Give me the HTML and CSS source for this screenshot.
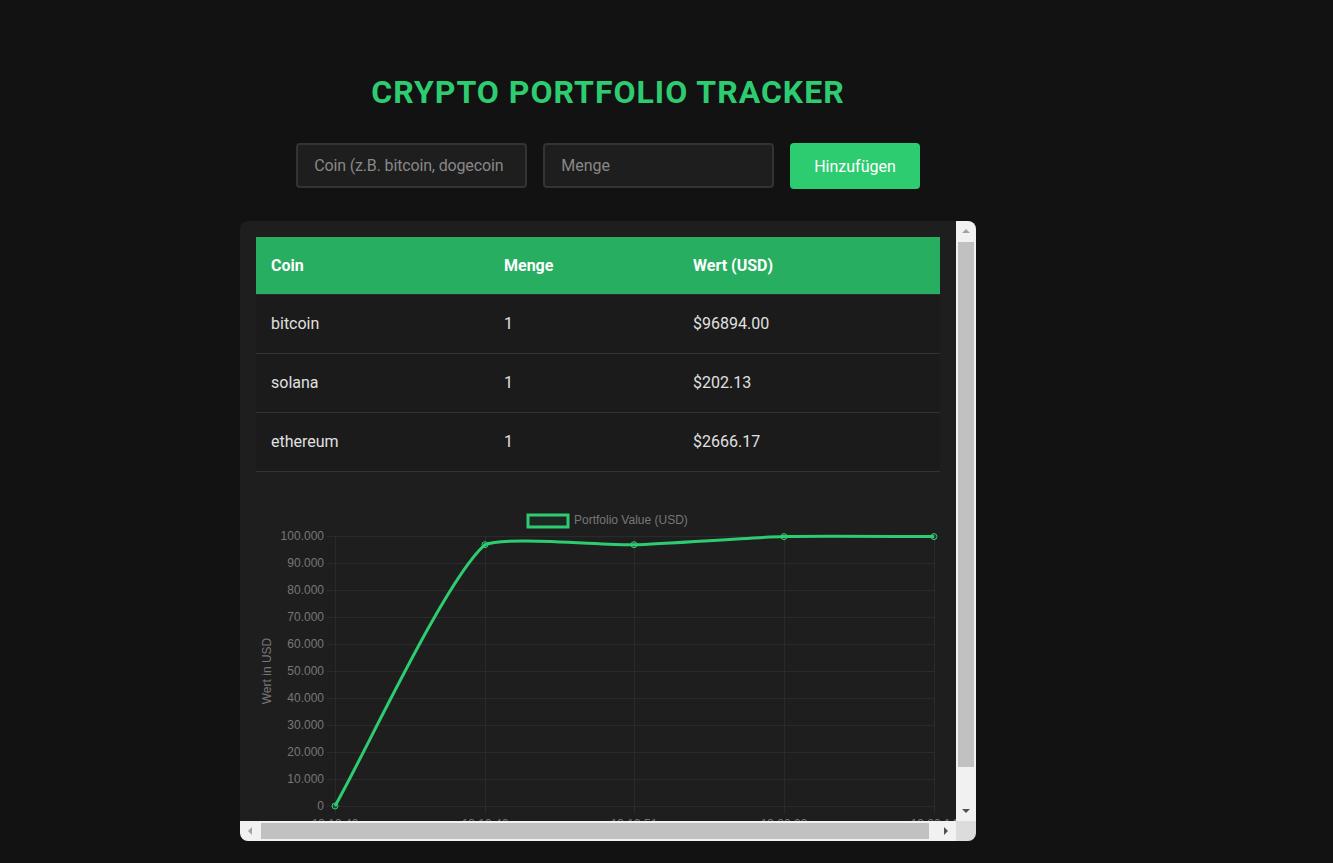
FILE: index.html
```html
<!DOCTYPE html>
<html lang="de">
<head>
<meta charset="utf-8">
<title>Crypto Portfolio Tracker</title>
<link rel="stylesheet" href="styles.css">
</head>
<body>
<div class="page">
  <div class="app">
    <h1 class="title">Crypto Portfolio Tracker</h1>
    <div class="form">
      <input class="field field-coin" type="text" placeholder="Coin (z.B. bitcoin, dogecoin">
      <input class="field" type="text" placeholder="Menge">
      <button class="btn" type="button">Hinzufügen</button>
    </div>
    <div class="panel">
      <div class="viewport">
        <table class="table">
          <colgroup>
            <col class="col-coin">
            <col class="col-amount">
            <col class="col-value">
          </colgroup>
          <thead>
            <tr><th>Coin</th><th>Menge</th><th>Wert (USD)</th></tr>
          </thead>
          <tbody>
            <tr><td>bitcoin</td><td>1</td><td>$96894.00</td></tr>
            <tr><td>solana</td><td>1</td><td>$202.13</td></tr>
            <tr><td>ethereum</td><td>1</td><td>$2666.17</td></tr>
          </tbody>
        </table>
        <svg class="chart" width="704" height="352" viewBox="0 0 704 352" xmlns="http://www.w3.org/2000/svg">
          <rect class="legend-box" x="272" y="23" width="40" height="12"/>
          <text class="lbl" x="318" y="32">Portfolio Value (USD)</text>
          <g class="grid">
            <line x1="71" y1="44.5" x2="678" y2="44.5"/>
            <line x1="71" y1="71.5" x2="678" y2="71.5"/>
            <line x1="71" y1="98.5" x2="678" y2="98.5"/>
            <line x1="71" y1="125.5" x2="678" y2="125.5"/>
            <line x1="71" y1="152.5" x2="678" y2="152.5"/>
            <line x1="71" y1="179.5" x2="678" y2="179.5"/>
            <line x1="71" y1="206.5" x2="678" y2="206.5"/>
            <line x1="71" y1="233.5" x2="678" y2="233.5"/>
            <line x1="71" y1="260.5" x2="678" y2="260.5"/>
            <line x1="71" y1="287.5" x2="678" y2="287.5"/>
            <line x1="71" y1="314.5" x2="678" y2="314.5"/>
            <line x1="79.5" y1="44" x2="79.5" y2="322"/>
            <line x1="229.5" y1="44" x2="229.5" y2="322"/>
            <line x1="378.5" y1="44" x2="378.5" y2="322"/>
            <line x1="528.5" y1="44" x2="528.5" y2="322"/>
            <line x1="678.5" y1="44" x2="678.5" y2="322"/>
          </g>
          <g class="lbl ylbl">
            <text x="68" y="48">100.000</text>
            <text x="68" y="75">90.000</text>
            <text x="68" y="102">80.000</text>
            <text x="68" y="129">70.000</text>
            <text x="68" y="156">60.000</text>
            <text x="68" y="183">50.000</text>
            <text x="68" y="210">40.000</text>
            <text x="68" y="237">30.000</text>
            <text x="68" y="264">20.000</text>
            <text x="68" y="291">10.000</text>
            <text x="68" y="318">0</text>
          </g>
          <text class="lbl axis-title" x="0" y="0" transform="translate(15 179) rotate(-90)">Wert in USD</text>
          <g class="lbl xlbl">
            <text x="79" y="336">13:19:40</text>
            <text x="229" y="336">13:19:46</text>
            <text x="378" y="336">13:19:51</text>
            <text x="528" y="336">13:20:03</text>
            <text x="678" y="336">13:20:14</text>
          </g>
          <path class="line" d="M79,314 C109,261.7 189,87.7 229,52.7 C248.8,44 348.2,53.5 378,52.7 C408.1,51.9 498,45.4 528,44.6 C558,44 648,44.6 678,44.6"/>
          <g class="pts">
            <circle cx="79" cy="314" r="3"/>
            <circle cx="229" cy="52.7" r="3"/>
            <circle cx="378" cy="52.7" r="3"/>
            <circle cx="528" cy="44.6" r="3"/>
            <circle cx="678" cy="44.6" r="3"/>
          </g>
        </svg>
      </div>
      <div class="vbar">
        <div class="sb-btn"><span class="arrow arrow-up"></span></div>
        <div class="vthumb"></div>
        <div class="sb-btn sb-end"><span class="arrow arrow-down"></span></div>
      </div>
      <div class="hbar">
        <div class="sb-btn"><span class="arrow arrow-left"></span></div>
        <div class="hthumb"></div>
        <div class="sb-btn sb-end"><span class="arrow arrow-right"></span></div>
      </div>
      <div class="corner"></div>
    </div>
  </div>
</div>
</body>
</html>
```

FILE: styles.css
```css
* { box-sizing: border-box; }

html, body {
  margin: 0;
  padding: 0;
  background: #121212;
}

body {
  font-family: Roboto, "Liberation Sans", Arial, sans-serif;
  color: #e0e0e0;
}

.page {
  width: 1216px;
  padding-top: 73px;
  padding-bottom: 22px;
}

.app {
  width: 736px;
  margin: 0 auto;
}

.title {
  margin: 0;
  font-size: 32px;
  line-height: 38px;
  font-weight: 700;
  letter-spacing: 1px;
  text-transform: uppercase;
  text-align: center;
  color: #2ecc71;
}

.form {
  display: flex;
  justify-content: center;
  align-items: flex-start;
  gap: 16px;
  margin-top: 32px;
}

.field {
  width: 231px;
  height: 45px;
  padding: 0 16px;
  background: #1e1e1e;
  border: 2px solid #333;
  border-radius: 4px;
  color: #e0e0e0;
  font-family: Roboto, "Liberation Sans", Arial, sans-serif;
  font-size: 16px;
  outline: none;
}

.field-coin {
  letter-spacing: -0.15px;
}

.field::placeholder {
  color: #888;
}

.btn {
  height: 46px;
  padding: 0 24px;
  background: #2ecc71;
  border: none;
  border-radius: 4px;
  color: #fff;
  font-family: Roboto, "Liberation Sans", Arial, sans-serif;
  font-size: 16px;
  cursor: pointer;
}

/* scroll panel */
.panel {
  margin-top: 32px;
  width: 736px;
  height: 620px;
  display: grid;
  grid-template-columns: 1fr 20px;
  grid-template-rows: 1fr 20px;
  background: #1e1e1e;
  border-radius: 8px;
  overflow: hidden;
}

.viewport {
  overflow: hidden;
  padding: 16px 16px 0 16px;
  min-width: 0;
  min-height: 0;
}

.vbar {
  display: flex;
  flex-direction: column;
  background: #f1f1f1;
}

.hbar {
  display: flex;
  flex-direction: row;
  background: #f1f1f1;
}

.corner {
  background: #dcdcdc;
}

.sb-btn {
  flex: 0 0 20px;
  width: 20px;
  height: 20px;
  display: flex;
  align-items: center;
  justify-content: center;
}

.sb-end {
  margin-top: auto;
}

.hbar .sb-end {
  margin-top: 0;
  margin-left: auto;
}

.vthumb {
  height: 525px;
  margin: 1px 2px 0 2px;
  background: #c1c1c1;
}

.hthumb {
  width: 668px;
  margin: 2px 0 2px 1px;
  background: #c1c1c1;
}

.arrow {
  display: block;
  width: 0;
  height: 0;
}

.arrow-up {
  border-left: 4px solid transparent;
  border-right: 4px solid transparent;
  border-bottom: 4px solid #a3a3a3;
}

.arrow-down {
  border-left: 4px solid transparent;
  border-right: 4px solid transparent;
  border-top: 4px solid #505050;
}

.arrow-left {
  border-top: 4px solid transparent;
  border-bottom: 4px solid transparent;
  border-right: 4px solid #a3a3a3;
}

.arrow-right {
  border-top: 4px solid transparent;
  border-bottom: 4px solid transparent;
  border-left: 4px solid #505050;
}

/* table */
.table {
  width: 100%;
  border-collapse: collapse;
  table-layout: fixed;
  font-size: 16px;
}

.col-coin { width: 233px; }
.col-amount { width: 189px; }

.table th {
  padding: 20px 15px;
  line-height: 17px;
  text-align: left;
  font-weight: 700;
  color: #fff;
  background: #27ae60;
  border-bottom: 1px solid #2a2a2a;
}

.table td {
  padding: 20px 15px;
  line-height: 18px;
  text-align: left;
  color: #e0e0e0;
  background: #1b1b1b;
  border-bottom: 1px solid #333;
}

/* chart */
.chart {
  display: block;
  margin-top: 20px;
  overflow: visible;
}

.chart .lbl {
  font-family: "Liberation Sans", Arial, sans-serif;
  font-size: 12px;
  fill: #777;
}

.chart .ylbl { text-anchor: end; }
.chart .xlbl { text-anchor: middle; }
.chart .axis-title { text-anchor: middle; }

.chart .grid line {
  stroke: #2a2a2a;
  stroke-width: 1;
}

.chart .legend-box {
  fill: rgba(46, 204, 113, 0.05);
  stroke: #2ecc71;
  stroke-width: 3;
}

.chart .line {
  fill: none;
  stroke: #2ecc71;
  stroke-width: 3;
}

.chart .pts circle {
  fill: rgba(46, 204, 113, 0.2);
  stroke: #2ecc71;
  stroke-width: 1;
}
```
